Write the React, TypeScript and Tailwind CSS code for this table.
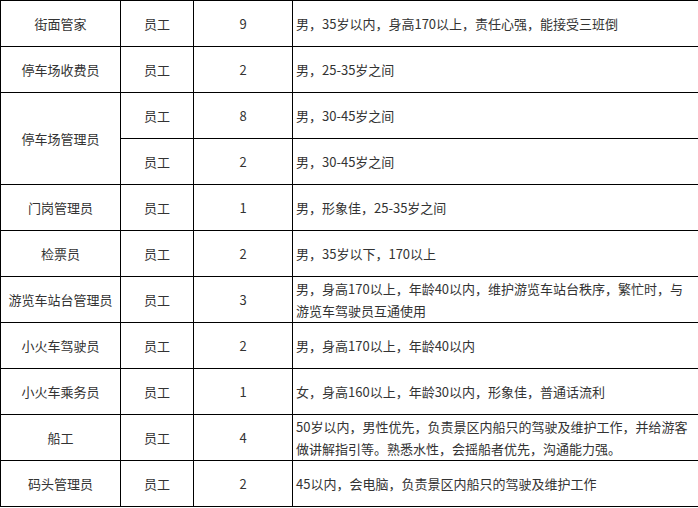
const rows: { title: string; count: string; desc: string; span?: number; skipTitle?: boolean }[] = [
  { title: '街面管家', count: '9', desc: '男，35岁以内，身高170以上，责任心强，能接受三班倒' },
  { title: '停车场收费员', count: '2', desc: '男，25-35岁之间' },
  { title: '停车场管理员', count: '8', desc: '男，30-45岁之间', span: 2 },
  { title: '', count: '2', desc: '男，30-45岁之间', skipTitle: true },
  { title: '门岗管理员', count: '1', desc: '男，形象佳，25-35岁之间' },
  { title: '检票员', count: '2', desc: '男，35岁以下，170以上' },
  { title: '游览车站台管理员', count: '3', desc: '男，身高170以上，年龄40以内，维护游览车站台秩序，繁忙时，与游览车驾驶员互通使用' },
  { title: '小火车驾驶员', count: '2', desc: '男，身高170以上，年龄40以内' },
  { title: '小火车乘务员', count: '1', desc: '女，身高160以上，年龄30以内，形象佳，普通话流利' },
  { title: '船工', count: '4', desc: '50岁以内，男性优先，负责景区内船只的驾驶及维护工作，并给游客做讲解指引等。熟悉水性，会摇船者优先，沟通能力强。' },
  { title: '码头管理员', count: '2', desc: '45以内，会电脑，负责景区内船只的驾驶及维护工作' },
];

const cell = 'border border-black align-middle';

export default function App() {
  return (
    <div
      className="w-[698px] h-[508px] bg-white text-[#333] text-[13px] leading-[22px]"
      style={{ fontFamily: '"Microsoft YaHei", "Noto Sans CJK SC", sans-serif' }}
    >
      <table className="table-fixed border-collapse w-[698px]">
        <colgroup>
          <col className="w-[120px]" />
          <col className="w-[73px]" />
          <col className="w-[99px]" />
          <col className="w-[406px]" />
        </colgroup>
        <tbody>
          {rows.map((r, i) => (
            <tr key={i} className="h-[46px]">
              {!r.skipTitle && (
                <td rowSpan={r.span ?? 1} className={`${cell} text-center`}>
                  {r.title}
                </td>
              )}
              <td className={`${cell} text-center`}>员工</td>
              <td className={`${cell} text-center`}>{r.count}</td>
              <td className={`${cell} pl-[3px] pr-1 text-left`}>{r.desc}</td>
            </tr>
          ))}
        </tbody>
      </table>
    </div>
  );
}
